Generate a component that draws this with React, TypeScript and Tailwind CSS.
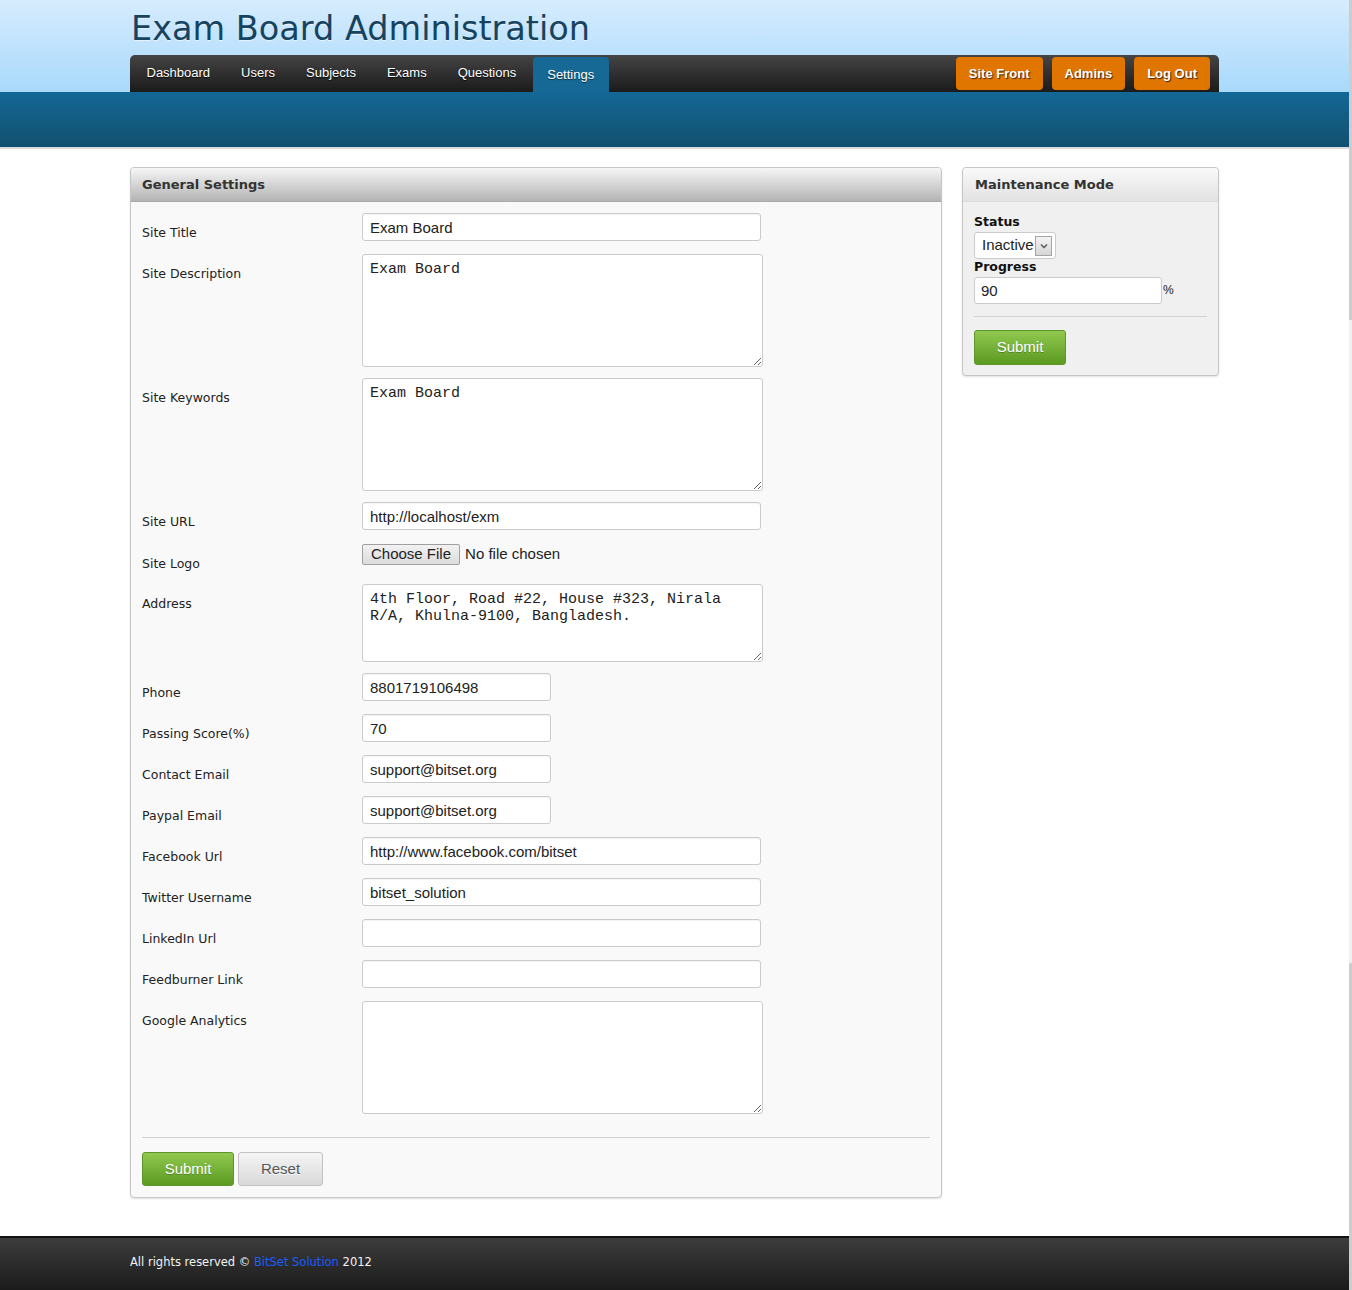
import { ReactNode } from 'react'

const navItems = ['Dashboard', 'Users', 'Subjects', 'Exams', 'Questions']

const labelFont = "font-['DejaVu_Sans',Verdana,sans-serif]"
const arial = "font-['Liberation_Sans',Arial,sans-serif]"
const mono = "font-['Liberation_Mono','Courier_New',monospace]"

function TextInput({ value = '', short = false }: { value?: string; short?: boolean }) {
  return (
    <input
      type="text"
      defaultValue={value}
      className={`${short ? 'w-[189px]' : 'w-[399px]'} h-[28px] rounded-[3px] border border-[#cbcbcb] bg-white px-[7px] text-[15px] text-[#222] shadow-[inset_0_1px_1px_rgba(0,0,0,0.05)] outline-none ${arial}`}
    />
  )
}

function TextArea({ value = '', h }: { value?: string; h: string }) {
  return (
    <textarea
      defaultValue={value}
      className={`w-[401px] ${h} rounded-[3px] border border-[#cbcbcb] bg-white px-[7px] pt-[6px] text-[15px] leading-[17px] text-[#222] outline-none ${mono}`}
    />
  )
}

function Row({ label, h, children }: { label: string; h: string; children: ReactNode }) {
  return (
    <div className={`flex ${h}`}>
      <div className={`w-[220px] shrink-0 pt-[12px] text-[12.5px] leading-[16px] text-[#222] ${labelFont}`}>{label}</div>
      <div>{children}</div>
    </div>
  )
}

function GreenButton({ w, h }: { w: string; h: string }) {
  return (
    <button
      className={`${w} ${h} rounded-[3px] border border-[#5f932c] bg-linear-to-b from-[#91c94f] to-[#5c9a20] text-[15px] text-white [text-shadow:0_1px_0_rgba(0,0,0,0.25)] ${arial}`}
    >
      Submit
    </button>
  )
}

export default function App() {
  return (
    <div className="flex min-h-[1290px] bg-white">
      <div className="flex flex-1 flex-col">
        {/* header */}
        <div className="bg-linear-to-b from-[#d6ecfe] to-[#a8d9fc]">
          <div className="mx-auto w-[1089px]">
            <h1 className={`pl-[1px] pt-[9px] text-[33.5px] leading-[39px] text-[#154360] [text-shadow:0_1px_0_rgba(255,255,255,0.6)] ${labelFont}`}>
              Exam Board Administration
            </h1>
            <div className="mt-[7px] flex h-[37px] rounded-t-[5px] bg-linear-to-b from-[#454545] to-[#1b1b1b] pl-[1px]">
              {navItems.map((item) => (
                <a
                  key={item}
                  className={`flex items-center px-[15.5px] pb-[1px] text-[13px] text-white [text-shadow:0_1px_1px_rgba(0,0,0,0.8)] ${arial}`}
                >
                  {item}
                </a>
              ))}
              <a
                className={`ml-[1px] mt-[2px] flex h-[36px] items-center rounded-t-[4px] border-b border-[#4a8fb5] bg-[#166995] px-[14.5px] pt-[1px] text-[13px] text-white [text-shadow:0_1px_1px_rgba(0,0,0,0.6)] ${arial}`}
              >
                Settings
              </a>
              <div className="ml-auto flex gap-[9px] pr-[9px] pt-[2px]">
                {['Site Front', 'Admins', 'Log Out'].map((b) => (
                  <a
                    key={b}
                    className={`flex h-[33px] items-center rounded-[4px] bg-[#e07600] px-[13px] text-[13px] font-bold text-white [text-shadow:1px_1px_1px_rgba(0,0,0,0.7)] ${arial}`}
                  >
                    {b}
                  </a>
                ))}
              </div>
            </div>
          </div>
        </div>
        <div className="h-[57px] border-b-2 border-[#dcdcdc] bg-linear-to-b from-[#136896] to-[#13506f]" />

        {/* main */}
        <div className="mx-auto flex w-[1089px] gap-[20px] pb-[38px] pt-[18px]">
          <div className="w-[812px] overflow-hidden rounded-[4px] border border-[#c6c6c6] bg-[#f9f9f9] shadow-[0_1px_2px_rgba(0,0,0,0.12)]">
            <div className={`flex h-[34px] items-center border-b border-[#a9a9a9] bg-linear-to-b from-[#f6f6f6] to-[#b4b4b4] px-[11px] text-[13px] font-bold text-[#333] ${labelFont}`}>
              General Settings
            </div>
            <div className="px-[11px] pb-[11px] pt-[11px]">
              <Row label="Site Title" h="h-[41px]">
                <TextInput value="Exam Board" />
              </Row>
              <Row label="Site Description" h="h-[124px]">
                <TextArea value="Exam Board" h="h-[113px]" />
              </Row>
              <Row label="Site Keywords" h="h-[124px]">
                <TextArea value="Exam Board" h="h-[113px]" />
              </Row>
              <Row label="Site URL" h="h-[42px]">
                <TextInput value="http://localhost/exm" />
              </Row>
              <Row label="Site Logo" h="h-[40px]">
                <div className={`flex h-[21px] items-center text-[15px] text-[#222] ${arial}`}>
                  <span className="flex h-[21px] items-center rounded-[2px] border border-[#a0a0a0] bg-linear-to-b from-[#f2f2f2] to-[#dcdcdc] px-[8px]">
                    Choose File
                  </span>
                  <span className="ml-[5px]">No file chosen</span>
                </div>
              </Row>
              <Row label="Address" h="h-[89px]">
                <TextArea value="4th Floor, Road #22, House #323, Nirala R/A, Khulna-9100, Bangladesh." h="h-[78px]" />
              </Row>
              <Row label="Phone" h="h-[41px]">
                <TextInput value="8801719106498" short />
              </Row>
              <Row label="Passing Score(%)" h="h-[41px]">
                <TextInput value="70" short />
              </Row>
              <Row label="Contact Email" h="h-[41px]">
                <TextInput value="support@bitset.org" short />
              </Row>
              <Row label="Paypal Email" h="h-[41px]">
                <TextInput value="support@bitset.org" short />
              </Row>
              <Row label="Facebook Url" h="h-[41px]">
                <TextInput value="http://www.facebook.com/bitset" />
              </Row>
              <Row label="Twitter Username" h="h-[41px]">
                <TextInput value="bitset_solution" />
              </Row>
              <Row label="LinkedIn Url" h="h-[41px]">
                <TextInput />
              </Row>
              <Row label="Feedburner Link" h="h-[41px]">
                <TextInput />
              </Row>
              <Row label="Google Analytics" h="h-[113px]">
                <TextArea h="h-[113px]" />
              </Row>
              <div className="mt-[23px] h-px bg-[#d2d2d2]" />
              <div className="mt-[14px] flex gap-[4px]">
                <GreenButton w="w-[92px]" h="h-[34px]" />
                <button
                  className={`h-[34px] w-[85px] rounded-[3px] border border-[#c2c2c2] bg-linear-to-b from-[#f5f5f5] to-[#d9d9d9] text-[15px] text-[#555] [text-shadow:0_1px_0_#fff] ${arial}`}
                >
                  Reset
                </button>
              </div>
            </div>
          </div>

          <div className="h-fit w-[257px] overflow-hidden rounded-[4px] border border-[#c6c6c6] bg-[#f0f0f0] shadow-[0_1px_2px_rgba(0,0,0,0.12)]">
            <div className={`flex h-[34px] items-center border-b border-[#dadada] bg-linear-to-b from-[#f9f9f9] to-[#e2e2e2] px-[12px] text-[13px] font-bold text-[#333] ${labelFont}`}>
              Maintenance Mode
            </div>
            <div className="px-[11px] pb-[10px] pt-[12px]">
              <div className={`text-[12.5px] font-bold leading-[16px] text-[#111] ${labelFont}`}>Status</div>
              <div className={`mt-[2px] flex h-[27px] w-[82px] items-center justify-between rounded-[3px] border border-[#cbcbcb] bg-white pl-[7px] pr-[3px] text-[15px] text-[#222] ${arial}`}>
                <span>Inactive</span>
                <span className="flex h-[20px] w-[17px] items-center justify-center border border-[#a5a5a5] bg-linear-to-b from-[#f4f4f4] to-[#d6d6d6]">
                  <svg width="8" height="6" viewBox="0 0 8 6">
                    <path d="M1 1.5 L4 4.5 L7 1.5" stroke="#555" strokeWidth="1.4" fill="none" />
                  </svg>
                </span>
              </div>
              <div className={`text-[12.5px] font-bold leading-[16px] text-[#111] ${labelFont}`}>Progress</div>
              <div className="mt-[2px] flex items-center gap-[1px]">
                <input
                  type="text"
                  defaultValue="90"
                  className={`h-[27px] w-[188px] rounded-[3px] border border-[#cbcbcb] bg-white px-[6px] text-[15px] text-[#222] outline-none ${arial}`}
                />
                <span className={`-mt-[2px] text-[12px] text-[#222] ${arial}`}>%</span>
              </div>
              <div className="mt-[12px] h-px w-[233px] bg-[#d2d2d2]" />
              <div className="mt-[13px]">
                <GreenButton w="w-[92px]" h="h-[35px]" />
              </div>
            </div>
          </div>
        </div>

        {/* footer */}
        <div className="mt-auto h-[54px] border-t-2 border-[#121212] bg-linear-to-b from-[#3d3d3d] to-[#1b1b1b]">
          <div className={`mx-auto flex h-full w-[1089px] items-center pb-[2px] text-[11.5px] text-[#f2f2f2] ${labelFont}`}>
            All rights reserved ©&nbsp;<a className="text-[#1a5cff]">BitSet Solution</a>&nbsp;2012
          </div>
        </div>
      </div>
      {/* scroll strip */}
      <div className="flex w-[3px] flex-col">
        <div className="h-[320px] bg-[#cdcdcd]" />
        <div className="h-[643px] bg-[#f0f0f0]" />
        <div className="flex-1 bg-[#cdcdcd]" />
      </div>
    </div>
  )
}
